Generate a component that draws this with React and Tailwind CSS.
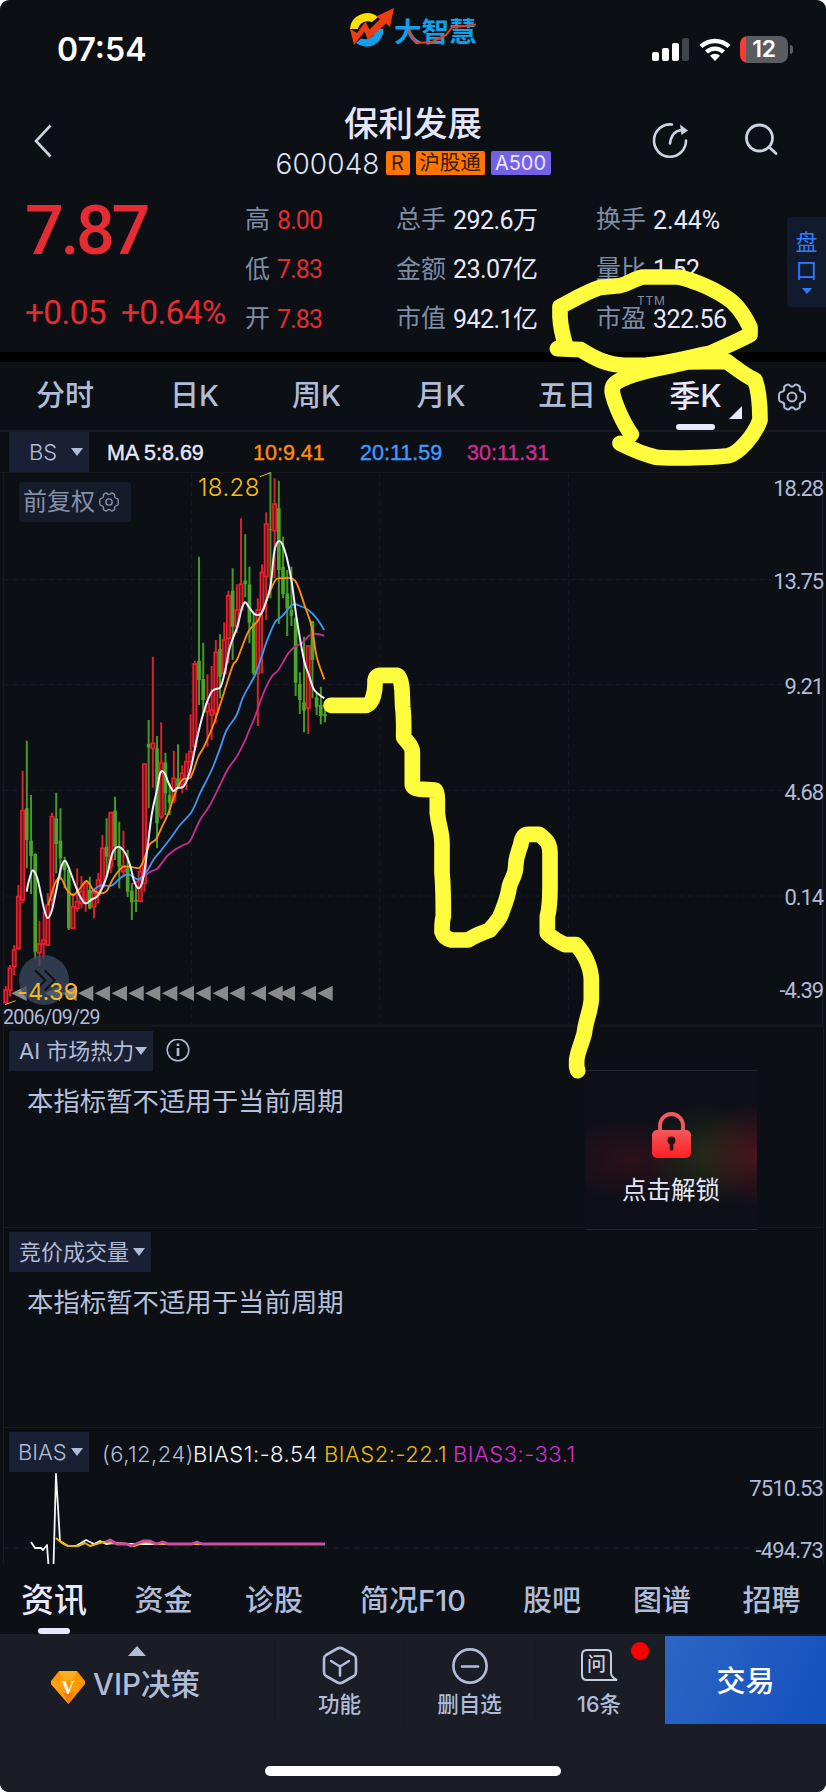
import React from "react";

// [wickTop, bodyTop, bodyBottom, wickBottom, rising]
const CANDLES = [
  [1578, 1590, 1628, 1630, 1], [1515, 1525, 1590, 1610, 1], [1455, 1470, 1520, 1545, 1], [1275, 1310, 1465, 1470, 1],
  [932, 1052, 1320, 1330, 1], [842, 1045, 1140, 1225, 0], [1005, 1142, 1188, 1302, 0], [1180, 1182, 1475, 1498, 0],
  [1382, 1452, 1478, 1518, 1], [1355, 1440, 1452, 1498, 1], [1300, 1335, 1455, 1457, 1], [1058, 1070, 1320, 1340, 1],
  [998, 1075, 1152, 1240, 0], [1045, 1142, 1195, 1260, 0], [1190, 1200, 1230, 1285, 0], [1220, 1230, 1405, 1410, 0],
  [1300, 1340, 1405, 1408, 1], [1225, 1325, 1345, 1355, 1], [1248, 1295, 1330, 1345, 1], [1265, 1270, 1320, 1355, 1],
  [1250, 1290, 1345, 1348, 0], [1290, 1300, 1340, 1375, 1], [1238, 1260, 1305, 1330, 1], [1125, 1165, 1280, 1282, 1],
  [1075, 1160, 1190, 1250, 0], [1055, 1058, 1220, 1240, 1], [1010, 1052, 1160, 1200, 0], [1085, 1165, 1220, 1285, 0],
  [1112, 1218, 1235, 1247, 1], [1170, 1225, 1295, 1312, 0], [1270, 1292, 1327, 1380, 0], [1275, 1320, 1325, 1356, 0],
  [1220, 1235, 1324, 1325, 1], [910, 912, 1270, 1295, 1], [780, 852, 862, 1045, 0], [590, 850, 865, 983, 1],
  [828, 865, 1090, 1165, 0], [787, 908, 1070, 1078, 1], [878, 908, 1000, 1065, 0], [970, 1005, 1028, 1065, 0],
  [872, 955, 1020, 1030, 1], [853, 955, 980, 985, 0], [915, 940, 975, 1000, 1], [880, 905, 955, 990, 1],
  [763, 875, 905, 955, 1], [602, 612, 860, 870, 1], [290, 602, 660, 735, 0], [548, 657, 720, 768, 0],
  [643, 730, 755, 860, 1], [618, 750, 765, 840, 1], [540, 577, 760, 790, 1], [523, 567, 650, 715, 0],
  [487, 540, 640, 642, 1], [392, 407, 535, 610, 1], [325, 392, 500, 600, 0], [373, 450, 500, 520, 1],
  [175, 373, 450, 455, 1], [223, 362, 372, 412, 0], [320, 373, 488, 550, 0], [460, 488, 640, 645, 0],
  [415, 450, 640, 798, 1], [313, 337, 450, 640, 1], [157, 192, 350, 480, 1], [37, 207, 210, 415, 0],
  [55, 132, 212, 355, 1], [62, 145, 330, 492, 0], [230, 320, 402, 415, 0], [330, 400, 445, 528, 0],
  [320, 450, 468, 498, 0], [470, 475, 668, 708, 0], [637, 672, 720, 762, 0], [530, 727, 752, 817, 0],
  [555, 558, 745, 822, 1], [482, 484, 600, 715, 0], [700, 712, 742, 765, 0], [680, 735, 768, 793, 0],
  [740, 762, 768, 787, 0],
];

const MA5 = [[80, 1295], [86, 1265], [98, 1231], [112, 1255], [122, 1300], [133, 1350], [143, 1374], [156, 1350], [172, 1275], [184, 1220], [195, 1202], [205, 1220], [220, 1260], [238, 1305], [256, 1330], [275, 1318], [295, 1305], [320, 1250], [337, 1180], [355, 1160], [375, 1178], [390, 1215], [402, 1262], [415, 1285], [426, 1268], [436, 1215], [455, 1065], [472, 985], [479, 945], [486, 933], [495, 942], [507, 972], [520, 993], [532, 984], [550, 980], [563, 955], [575, 915], [590, 840], [610, 760], [632, 700], [645, 688], [662, 680], [676, 630], [690, 560], [712, 500], [724, 450], [735, 427], [748, 443], [765, 463], [783, 461], [795, 435], [812, 375], [822, 280], [830, 250], [838, 244], [847, 252], [860, 292], [875, 365], [890, 475], [912, 600], [925, 640], [940, 685], [955, 702], [973, 715]];
const MA10 = [[145, 1335], [163, 1275], [181, 1252], [200, 1288], [220, 1305], [240, 1285], [260, 1263], [280, 1290], [300, 1300], [320, 1293], [340, 1255], [368, 1221], [400, 1222], [420, 1222], [435, 1190], [450, 1152], [468, 1138], [485, 1102], [505, 1060], [520, 1015], [535, 978], [550, 957], [572, 952], [595, 890], [612, 860], [640, 795], [665, 720], [697, 620], [712, 597], [745, 515], [775, 480], [800, 420], [825, 362], [845, 355], [885, 362], [915, 440], [935, 500], [950, 590], [973, 658]];
const MA20 = [[272, 1298], [300, 1277], [335, 1277], [360, 1255], [385, 1243], [415, 1258], [440, 1235], [460, 1200], [480, 1175], [510, 1137], [540, 1095], [575, 1055], [600, 1000], [635, 930], [660, 865], [680, 810], [710, 765], [730, 710], [765, 645], [785, 590], [800, 545], [825, 487], [845, 470], [878, 434], [900, 438], [925, 450], [950, 475], [973, 510]];
const MA30 = [[395, 1273], [420, 1260], [435, 1247], [455, 1233], [472, 1226], [500, 1190], [520, 1172], [550, 1155], [570, 1143], [600, 1080], [630, 1035], [660, 975], [685, 925], [710, 890], [735, 842], [748, 810], [765, 770], [790, 700], [815, 650], [835, 630], [865, 580], [885, 560], [905, 550], [930, 525], [950, 522], [973, 527]];

const SIGNALS = [80, 180, 230, 280, 330, 381, 431, 481, 532, 582, 632, 684, 734, 798, 848, 885, 948, 998];

function smooth(p) {
  let d = `M${p[0][0]} ${p[0][1]}`;
  for (let i = 0; i < p.length - 1; i++) {
    const a = p[i - 1] || p[i];
    const b = p[i];
    const c = p[i + 1];
    const e = p[i + 2] || c;
    d += `C${b[0] + (c[0] - a[0]) / 6} ${b[1] + (c[1] - a[1]) / 6} ${c[0] - (e[0] - b[0]) / 6} ${c[1] - (e[1] - b[1]) / 6} ${c[0]} ${c[1]}`;
  }
  return d;
}

function Gear({ className }) {
  return (
    <svg className={className} viewBox="0 0 28 28" fill="none" stroke="currentColor" strokeWidth="2" strokeLinejoin="round">
      <path d="M9.2 1.6Q11 1 12 2.8Q14 4.4 16 2.8Q17 1 18.8 1.6L21 2.9Q22.4 4 21.6 5.6Q21.8 8.6 24.6 8.9Q26.4 9 26.8 11Q27.3 14 26.8 17Q26.4 19 24.6 19.1Q21.8 19.4 21.6 22.4Q22.4 24 21 25.1L18.8 26.4Q17 27 16 25.2Q14 23.6 12 25.2Q11 27 9.2 26.4L7 25.1Q5.6 24 6.4 22.4Q6.2 19.4 3.4 19.1Q1.6 19 1.2 17Q.7 14 1.2 11Q1.6 9 3.4 8.9Q6.2 8.6 6.4 5.6Q5.6 4 7 2.9Z" />
      <circle cx="14" cy="14" r="4.4" />
    </svg>
  );
}

function StatusBar() {
  return (
    <div className="flex h-[98px] shrink-0 items-start">
      <div className="ml-[57px] mt-[34px] w-[293px] whitespace-nowrap text-[32px] font-semibold leading-[31px] text-white">07:54</div>
      <svg className="mt-[7px] h-[42px] w-[44px] shrink-0" viewBox="0 0 44 42">
        <path d="M0 22A17 16 0 0 1 28 10L22 15A10 9 0 0 0 8 22Z" fill="#ffdf00" />
        <path d="M33.500 22A17 17 0 0 1 6 36L11 31.500A11 10 0 0 0 24 28L20 28L20 22Z" fill="#12a0e8" />
        <path d="M0 22L7 26L15.500 14.500L19.500 22.500L30 12L26 9.500L44 1L40 20L36 16.500L18 33L14.500 24.500L4 38Z" fill="#ef3b12" />
      </svg>
      <div className="relative mt-[18px] h-[28px] w-[84px] shrink-0">
        <div className="whitespace-nowrap text-[27.500px] font-bold leading-[28px] text-[#12a0e8]">大智慧</div>
        <svg className="absolute left-0 top-0 h-[28px] w-[84px]" viewBox="0 0 84 28" fill="none">
          <path d="M14 12L22 25L38 24L52 17L58 9.500L82 6.500" stroke="#ef3b12" strokeWidth="2" />
        </svg>
      </div>
      <svg className="ml-[174px] mt-[37px] h-[25px] w-[37px] shrink-0" viewBox="0 0 37 25">
        <rect x="0" y="15" width="7" height="9" rx="2" fill="#fff" />
        <rect x="10" y="11" width="7" height="13" rx="2" fill="#fff" />
        <rect x="20" y="6" width="7" height="18" rx="2" fill="#fff" />
        <rect x="30" y="1" width="7" height="23" rx="2" fill="#404349" />
      </svg>
      <svg className="ml-[10px] mt-[37px] h-[24px] w-[32px] shrink-0" viewBox="0 0 32 24" fill="none" stroke="#fff">
        <path d="M2 9.500A20.500 20.500 0 0 1 30 9.500" strokeWidth="4.400" />
        <path d="M7.500 15A12.500 12.500 0 0 1 24.500 15" strokeWidth="4.200" />
        <path d="M16 24L11 18.800A7.200 7.200 0 0 1 21 18.800Z" fill="#fff" stroke="none" />
      </svg>
      <div className="ml-[9px] mt-[36px] flex h-[27px] w-[48px] items-center justify-center rounded-[8px] bg-[linear-gradient(90deg,#fb3b34_0_6px,#5a5c61_6px)] text-[23px] font-semibold leading-none tracking-[-0.3px] text-white">12</div>
      <div className="ml-[2px] mt-[45px] h-[9px] w-[3px] rounded-r-full bg-[#5a5c61]" />
    </div>
  );
}

function Header() {
  return (
    <div className="flex h-[92px] shrink-0 items-start text-[#cdd3e2]">
      <svg className="ml-[33px] mt-[26px] h-[34px] w-[20px]" viewBox="0 0 20 34" fill="none" stroke="currentColor" strokeWidth="2.600">
        <path d="M17.500 1.500L3 17L17.500 32.500" />
      </svg>
      <div className="ml-[206px] flex w-[308px] flex-col items-center">
        <div className="mt-[7px] whitespace-nowrap text-[34.500px] font-medium leading-[38px] text-[#e4e6fb]">保利发展</div>
        <div className="mt-[8px] flex h-[24px] items-center whitespace-nowrap">
          <span className="w-[110px] pt-[2px] text-[28px] font-light leading-[24px] tracking-[0.100px] text-[#dfe3f5]">600048</span>
          <span className="flex h-[24px] w-[24px] items-center justify-center rounded-[2px] bg-[#ff7500] text-[20px] leading-none text-[#33200c]">R</span>
          <span className="ml-[6px] flex h-[24px] w-[69px] items-center justify-center rounded-[2px] bg-[#ff7500] text-[20.500px] leading-none text-[#33200c]">沪股通</span>
          <span className="ml-[6px] flex h-[24px] w-[60px] items-center justify-center rounded-[2px] bg-[#7561e6] text-[20px] leading-none text-[#e9e6ff]">A500</span>
        </div>
      </div>
      <svg className="ml-[84px] mt-[24px] h-[37px] w-[38px]" viewBox="0 0 38 37" fill="none" stroke="currentColor" strokeWidth="2.600" strokeLinecap="round">
        <path d="M21 2.500A16 16.200 0 1 0 35 18.500" />
        <path d="M19 21.500Q20.500 9 31 8" />
        <path d="M29 2.600L37 8.400L30.500 13Z" fill="currentColor" stroke="none" />
      </svg>
      <svg className="ml-[55px] mt-[25px] h-[33px] w-[35px]" viewBox="0 0 35 33" fill="none" stroke="currentColor" strokeWidth="2.800" strokeLinecap="round">
        <circle cx="15.500" cy="15" r="13" />
        <path d="M26 25L32 30.500" />
      </svg>
    </div>
  );
}

function Stat({ label, value, tone = "text-[#e6e8fb]", tracking = "tracking-[-0.550px]" }) {
  return (
    <div className="flex h-[49.500px] items-center whitespace-nowrap">
      <span className="text-[25px] leading-none text-[#7f8ca6]">{label}</span>
      <span className={`ml-[7px] pt-[1px] font-[Roboto,'Noto_Sans_CJK_SC',sans-serif] text-[25px] leading-none ${tracking} ${tone}`}>{value}</span>
    </div>
  );
}

function Quote() {
  const red = "text-[#e52b33]";
  const narrow = "tracking-[-0.900px]";
  return (
    <div className="flex h-[162px] shrink-0 items-start">
      <div className="ml-[25px] w-[220px] whitespace-nowrap font-[Roboto,sans-serif] text-[#e52b33]">
        <div className="mt-[6px] text-[68.500px] font-medium leading-[70px] tracking-[-3.500px]">7.87</div>
        <div className="mt-[30px] flex text-[33.500px] leading-[34px] tracking-[-0.700px]">
          <span className="w-[96px]">+0.05</span>
          <span>+0.64%</span>
        </div>
      </div>
      <div className="mt-[5px] w-[151px]">
        <Stat label="高" value="8.00" tone={red} tracking={narrow} />
        <Stat label="低" value="7.83" tone={red} tracking={narrow} />
        <Stat label="开" value="7.83" tone={red} tracking={narrow} />
      </div>
      <div className="mt-[5px] w-[200px]">
        <Stat label="总手" value="292.6万" />
        <Stat label="金额" value="23.07亿" />
        <Stat label="市值" value="942.1亿" />
      </div>
      <div className="mt-[5px] w-[191px]">
        <Stat label="换手" value="2.44%" tracking="tracking-[0px]" />
        <Stat label="量比" value="1.52" />
        <div className="relative">
          <Stat label="市盈" value="322.56" />
          <span className="absolute left-[41px] top-[1px] text-[12px] leading-none tracking-[0.800px] text-[#7f8ca6]">TTM</span>
        </div>
      </div>
      <div className="mt-[27px] flex h-[90px] w-[39px] flex-col items-center rounded-l-[4px] bg-[#121b2e] pt-[12px] text-[22px] leading-[27.500px] text-[#2f7dff]">
        <span>盘</span>
        <span>口</span>
        <svg className="mt-[4px] h-[6px] w-[10px]" viewBox="0 0 10 6"><path d="M0 0H10L5 6Z" fill="currentColor" /></svg>
      </div>
    </div>
  );
}

function PeriodTabs() {
  const tab = "flex items-center justify-center";
  return (
    <div className="flex h-[70px] shrink-0 items-stretch whitespace-nowrap border-b-2 border-[#171a20] pb-[2px] text-[29px] font-medium leading-none text-[#b0bcd8]">
      <div className={`${tab} w-[130px]`}>分时</div>
      <div className={`${tab} w-[129px]`}>日K</div>
      <div className={`${tab} w-[115px]`}>周K</div>
      <div className={`${tab} w-[134px]`}>月K</div>
      <div className={`${tab} w-[118px]`}>五日</div>
      <div className={`${tab} relative w-[139px] text-[31px] text-[#e8e9ff]`}>
        季K
        <span className="absolute left-[50px] top-[62px] h-[6px] w-[39px] rounded-full bg-[#e8e9ff]" />
        <svg className="absolute left-[103px] top-[44px] h-[13px] w-[13px]" viewBox="0 0 13 13"><path d="M13 0V13H0Z" fill="currentColor" /></svg>
      </div>
      <div className={`${tab} w-[54px] pt-[3px]`}><Gear className="h-[28px] w-[28px]" /></div>
    </div>
  );
}

function Dropdown({ children, className }) {
  return (
    <div className={`flex h-[40px] shrink-0 items-center justify-between whitespace-nowrap bg-[#192033] pr-[6px] text-[22px] leading-none text-[#b0bcd8] ${className}`}>
      {children}
      <svg className="h-[8px] w-[12px]" viewBox="0 0 12 8"><path d="M0 0H12L6 8Z" fill="currentColor" /></svg>
    </div>
  );
}

function MaLegend() {
  return (
    <div className="flex h-[40px] shrink-0 items-center whitespace-nowrap font-['Liberation_Sans',sans-serif] text-[21.500px] leading-none [-webkit-text-stroke:0.400px]">
      <Dropdown className="ml-[9px] w-[80px] pl-[20px] font-[Inter,sans-serif] font-light [-webkit-text-stroke:0px]"><span>BS</span></Dropdown>
      <span className="ml-[18px] w-[146px] pt-[4px] text-[#e8e9ff]">MA 5:8.69</span>
      <span className="w-[107px] pt-[4px] text-[#ff8d0a]">10:9.41</span>
      <span className="w-[107px] pt-[4px] text-[#3f9bff]">20:11.59</span>
      <span className="pt-[4px] text-[#c92f92]">30:11.31</span>
    </div>
  );
}

function AxisLabels() {
  const cls = "w-full text-right leading-[22px]";
  return (
    <div className="absolute right-[3px] top-0 flex h-full w-[90px] flex-col pt-[6px] font-[Roboto,sans-serif] text-[22px] tracking-[-1.100px] text-[#b0bcd8]">
      <div className={cls}>18.28</div>
      <div className={`${cls} mt-[71px]`}>13.75</div>
      <div className={`${cls} mt-[83px]`}>9.21</div>
      <div className={`${cls} mt-[84px]`}>4.68</div>
      <div className={`${cls} mt-[83px]`}>0.14</div>
      <div className={`${cls} mt-[71px]`}>-4.39</div>
    </div>
  );
}

function PriceChart() {
  return (
    <div className="relative h-[555px] shrink-0">
      <svg className="block h-[555px] w-[826px]" viewBox="0 36 2478 1665" fill="none">
        <g stroke="#181b21" strokeWidth="4">
          <path d="M0 36H2478" />
          <path d="M11 36V1700M2468 36V1700" />
          <path d="M11 1697H2468" strokeWidth="9" stroke="#12171b" />
          <path d="M11 359H2468M11 674H2468M11 991H2468M11 1308H2468M575 40V1700M1139 40V1700M1705 40V1700" strokeDasharray="15 12" strokeWidth="3" />
        </g>
        {CANDLES.map(([wt, bt, bb, wb, up], i) => {
          const x = 17.5 + 12.6 * i;
          const color = up ? "#d8222c" : "#439a25";
          return (
            <g key={i}>
              <path d={`M${x} ${wt}V${up ? bt : wb}M${x} ${bb}V${wb}`} stroke={color} strokeWidth="6" />
              {up ? (
                <rect x={x - 5} y={bt} width="10" height={bb - bt} stroke="#ea202c" strokeWidth="5" fill="#6a161e" />
              ) : (
                <rect x={x - 5.5} y={bt} width="11" height={bb - bt} fill="#4aa528" />
              )}
            </g>
          );
        })}
        <g strokeWidth="5.500" strokeLinejoin="round">
          <path d={smooth(MA30)} stroke="#c22f90" />
          <path d={smooth(MA20)} stroke="#3f97f5" />
          <path d={smooth(MA10)} stroke="#ff8f0a" />
          <path d={smooth(MA5)} stroke="#f0f0fb" strokeWidth="6" />
        </g>
        {SIGNALS.map((x) => (
          <path key={x} d={`M${x} 1577V1623L${x - 46} 1600Z`} fill="#8a8a8a" />
        ))}
        <circle cx="132" cy="1560" r="75" fill="#3c4963" fillOpacity="0.750" />
        <path d="M105 1531L136 1561L105 1592M134 1531L164 1561L134 1592" stroke="#0c0f14" strokeWidth="6" />
        <path d="M780 50L812 38M15 1634L47 1622" stroke="#e9b72c" strokeWidth="3" />
      </svg>
      <div className="absolute left-[19px] top-[10px] flex h-[40px] w-[112px] items-center gap-[4px] whitespace-nowrap rounded-[4px] bg-[#161b2a] pl-[4px] text-[24px] leading-none text-[#8490a8]">
        前复权<Gear className="h-[20px] w-[20px]" />
      </div>
      <div className="absolute left-[198px] top-[4px] text-[24px] font-light leading-[24px] tracking-[0.400px] text-[#fdbb0c]">18.28</div>
      <div className="absolute left-[17px] top-[508px] text-[23.500px] font-normal leading-[24px] tracking-[0.200px] text-[#f2b81e]">-4.39</div>
      <div className="absolute left-[3px] top-[536px] font-[Roboto,sans-serif] text-[19.500px] leading-[20px] tracking-[-0.700px] text-[#b0bcd8]">2006/09/29</div>
      <AxisLabels />
    </div>
  );
}

function LockCard() {
  return (
    <div className="absolute left-[581px] top-[43px] z-10 flex h-[160px] w-[172px] flex-col items-center border-y border-[#24242c] bg-[#0f1017] bg-[radial-gradient(ellipse_60px_52px_at_170px_84px,rgba(110,22,34,0.600),transparent),radial-gradient(ellipse_56px_52px_at_118px_84px,rgba(34,50,24,0.800),transparent),radial-gradient(ellipse_80px_40px_at_45px_88px,rgba(64,16,28,0.600),transparent)] pt-[41px]">
      <svg className="h-[46px] w-[39px]" viewBox="0 0 39 46" fill="none">
        <defs>
          <linearGradient id="lockFill" x1="0" y1="0" x2="0" y2="1">
            <stop offset="0" stopColor="#f4575b" />
            <stop offset="1" stopColor="#ff1f24" />
          </linearGradient>
        </defs>
        <path d="M8 20V13.500A11.500 11.500 0 0 1 31 13.500V20" stroke="#f0595e" strokeWidth="3.800" />
        <rect x="0" y="18" width="39" height="28" rx="5" fill="url(#lockFill)" />
        <circle cx="19.500" cy="28.500" r="4" fill="#2a0d12" />
        <path d="M19.500 28V37" stroke="#2a0d12" strokeWidth="3.600" strokeLinecap="round" />
      </svg>
      <div className="mt-[19px] whitespace-nowrap text-[24.500px] leading-[26px] text-[#e4e6fb]">点击解锁</div>
    </div>
  );
}

function Indicators() {
  const note = "ml-[23px] mt-[16px] whitespace-nowrap text-[26.400px] leading-[28px] text-[#b5c0da]";
  return (
    <div className="ml-[3px] mr-[2px] flex h-[401px] shrink-0 flex-col border-x border-[#171a20]">
      <div className="relative h-[201px] shrink-0 border-b border-[#171a20] pt-[4px]">
        <div className="flex items-center">
          <Dropdown className="ml-[5px] w-[144px] pl-[10px]"><span>AI 市场热力</span></Dropdown>
          <svg className="ml-[13px] h-[24px] w-[24px] text-[#b0bcd8]" viewBox="0 0 24 24" fill="none" stroke="currentColor">
            <circle cx="12" cy="11" r="10.800" strokeWidth="1.500" />
            <path d="M12 9V17M12 4.500V7" strokeWidth="2.600" />
          </svg>
        </div>
        <div className={note}>本指标暂不适用于当前周期</div>
        <LockCard />
      </div>
      <div className="h-[200px] shrink-0 border-b border-[#171a20] pt-[4px]">
        <Dropdown className="ml-[5px] w-[142px] pl-[10px]"><span>竞价成交量</span></Dropdown>
        <div className={note}>本指标暂不适用于当前周期</div>
      </div>
    </div>
  );
}

function BiasChart() {
  return (
    <div className="relative ml-[3px] mr-[2px] flex h-[136px] shrink-0 flex-col border-x border-[#171a20] pt-[4px]">
      <div className="flex items-center whitespace-nowrap text-[22px] font-light leading-none tracking-[0.500px]">
        <Dropdown className="ml-[5px] w-[80px] pl-[9px] tracking-[0px]"><span>BIAS</span></Dropdown>
        <span className="ml-[13px] w-[91px] pt-[3px] text-[#b0bcd8]">(6,12,24)</span>
        <span className="w-[131px] pt-[3px] text-[#f5f5fb]">BIAS1:-8.54</span>
        <span className="w-[129px] pt-[3px] text-[#e9b90f]">BIAS2:-22.1</span>
        <span className="pt-[3px] text-[#d42fd0]">BIAS3:-33.1</span>
      </div>
      <svg className="absolute left-0 top-[44px] h-[92px] w-[820px]" viewBox="4 1472 820 92" fill="none" strokeLinejoin="round">
        <path d="M4 1548H824" stroke="#1b1e24" strokeWidth="1.500" strokeDasharray="5 5" />
        <path d="M31 1542L35 1548L41 1548L43 1550L47 1545L48.500 1566M53.500 1566L56 1474L60 1541L68 1546L76 1546L86 1540L94 1544L100 1541L106 1544L113 1543L127 1544L325 1544" stroke="#f5f5f5" strokeWidth="1.800" />
        <path d="M56 1538L62 1543L68 1546L78 1546L85 1543L90 1546L103 1542L127 1544L134 1546L146 1542L156 1544L200 1544" stroke="#e9b90f" strokeWidth="2" />
        <path d="M106 1542L110 1540L117 1544L127 1544L131 1546L143 1541L150 1541L156 1544L163 1542L168 1544L192 1544L197 1542L202 1544L325 1544" stroke="#cc4ca5" strokeWidth="2.800" />
      </svg>
      <div className="absolute right-0 top-[50px] flex flex-col items-end gap-[40px] font-[Roboto,sans-serif] text-[22px] leading-[22px] tracking-[-0.900px] text-[#b0bcd8]">
        <span>7510.53</span>
        <span>-494.73</span>
      </div>
    </div>
  );
}

function InfoTabs() {
  const tab = "flex items-center justify-center";
  return (
    <div className="flex h-[70px] shrink-0 whitespace-nowrap text-[29px] font-medium leading-none text-[#b0bcd8]">
      <div className={`${tab} relative w-[108px] pt-[2px] text-[33px] text-[#e8e9ff]`}>
        资讯
        <span className="absolute bottom-0 left-[38px] h-[6px] w-[32px] rounded-full bg-[#e8e9ff]" />
      </div>
      <div className={`${tab} w-[111px] pt-[2px]`}>资金</div>
      <div className={`${tab} w-[110px] pt-[2px]`}>诊股</div>
      <div className={`${tab} w-[168px] pt-[2px]`}>简况F10</div>
      <div className={`${tab} w-[110px] pt-[2px]`}>股吧</div>
      <div className={`${tab} w-[110px] pt-[2px]`}>图谱</div>
      <div className={`${tab} w-[109px] pt-[2px]`}>招聘</div>
    </div>
  );
}

function BottomBar() {
  const item = "flex h-[84px] flex-col items-center border-l border-[#171922] whitespace-nowrap text-[21.500px] font-medium leading-[24px] text-[#b0bcd8]";
  return (
    <div className="flex h-[158px] shrink-0 flex-col bg-[#1b1d26]">
      <div className="flex h-[90px] items-end">
        <div className="flex h-[90px] w-[274px] flex-col text-[#b0bcd8]">
          <svg className="ml-[128px] mt-[12px] h-[10px] w-[18px]" viewBox="0 0 18 10"><path d="M9 0L18 10H0Z" fill="currentColor" /></svg>
          <div className="ml-[51px] mt-[12px] flex h-[34px] items-center">
            <svg className="mt-[4px] h-[33px] w-[34px]" viewBox="0 0 34 33">
              <path d="M8 0H26L34 10V13L17.500 33L0 13V10Z" fill="#ff9800" />
              <path d="M8 0H26L22 9H12Z" fill="#ffab1c" />
              <path d="M0 10L12 9L17.500 33L0 13Z" fill="#ff9d10" />
              <path d="M12 22L17.500 33L23 22Z" fill="#f47a08" />
              <text x="17" y="22.500" textAnchor="middle" fontFamily="Liberation Serif, serif" fontWeight="bold" fontSize="18" fill="#fff">V</text>
            </svg>
            <span className="ml-[8px] whitespace-nowrap text-[29.500px] font-medium leading-none">VIP决策</span>
          </div>
        </div>
        <div className={`${item} w-[130px]`}>
          <svg className="mt-[6px] h-[40px] w-[36px]" viewBox="0 0 36 40" fill="none" stroke="currentColor" strokeWidth="2.600" strokeLinecap="round" strokeLinejoin="round">
            <path d="M15.500 2.500Q18 1.200 20.500 2.500L32 9Q34 10.300 34 13V26Q34 28.700 32 30L20.500 36.500Q18 37.800 15.500 36.500L4 30Q2 28.700 2 26V13Q2 10.300 4 9Z" />
            <path d="M9 15L18 20.500L27 15M18 20.500V29.500" />
          </svg>
          <span className="mt-[6px]">功能</span>
        </div>
        <div className={`${item} w-[130px]`}>
          <svg className="mt-[8px] h-[38px] w-[38px]" viewBox="0 0 38 38" fill="none" stroke="currentColor" strokeWidth="2.600">
            <circle cx="19" cy="18" r="16.600" />
            <path d="M11 18.500H27" strokeLinecap="round" />
          </svg>
          <span className="mt-[6px]">删自选</span>
        </div>
        <div className={`${item} relative w-[131px] pr-[2px]`}>
          <div className="relative mt-[8px] h-[38px] w-[38px]">
            <svg className="h-[38px] w-[38px]" viewBox="0 0 38 38" fill="none" stroke="#c8cddd" strokeWidth="2">
              <path d="M35 32H7Q2 32 2 27V7Q2 2 7 2H27Q31 2 31 7V25Q31 29 37 32Z" />
            </svg>
            <span className="absolute left-[7px] top-[5px] text-[19px] leading-[24px] text-[#c8cddd]">问</span>
          </div>
          <span className="mt-[6px]">16条</span>
          <span className="absolute left-[96px] top-[2px] h-[18px] w-[18px] rounded-full bg-[#ff0000]" />
        </div>
        <div className="flex h-[88px] w-[161px] items-center justify-center bg-[linear-gradient(115deg,#2d66c4,#1250bd)] pt-[2px] text-[29px] font-medium leading-none text-white">交易</div>
      </div>
      <div className="mx-auto mt-[42px] h-[10px] w-[296px] rounded-full bg-white" />
    </div>
  );
}

function Scribbles() {
  return (
    <svg className="pointer-events-none absolute left-0 top-0 z-20 h-[1792px] w-[826px]" viewBox="0 0 826 1792" fill="none" stroke="#fffb3d" strokeLinecap="round" strokeLinejoin="round">
      <g transform="translate(400 190) scale(0.33333)" strokeWidth="47">
        <path d="M472 476L542 479C580 503 620 525 675 526L740 525C820 518 880 498 930 490C980 468 1030 445 1050 434L1050 412C1030 370 1005 338 978 322C930 290 870 268 835 261L728 261C700 266 680 287 648 288L602 292C560 305 510 335 480 350L480 380C482 420 490 445 498 470" />
        <path d="M694 733C670 700 645 645 637 608C634 585 645 575 680 562C720 546 750 540 800 530L860 516L980 514C1010 536 1040 560 1065 570C1076 600 1080 650 1080 690C1062 740 1015 790 985 797C930 803 800 807 765 801C730 793 690 775 660 760" />
      </g>
      <path transform="translate(320 640) scale(0.33333)" strokeWidth="47" d="M33 196H140C160 188 166 150 165 125Q165 106 182 106H230Q243 108 246 150L248 200Q252 230 251 292C262 306 277 318 277 335V435Q280 448 310 448L345 450Q352 455 352 480V520C356 560 366 575 366 610V700Q370 740 370 830Q366 840 366 875Q372 895 395 900H445C470 882 490 878 510 870C520 852 538 845 546 815C556 790 565 765 568 740C575 715 587 705 587 680C588 640 602 625 604 605Q610 583 625 583H658C680 600 690 610 690 640V740Q690 800 682 830V880Q700 898 735 914H768C794 940 814 985 814 1020V1080C810 1120 797 1140 793 1180C782 1220 771 1240 770 1262V1280L773 1292" />
    </svg>
  );
}

export default function App() {
  return (
    <div className="relative flex h-[1792px] w-[826px] flex-col overflow-hidden rounded-[9px] bg-[#0c0f14] font-[Inter,'Noto_Sans_CJK_SC',sans-serif]">
      <StatusBar />
      <Header />
      <Quote />
      <div className="h-[10px] shrink-0 bg-black" />
      <PeriodTabs />
      <MaLegend />
      <PriceChart />
      <Indicators />
      <BiasChart />
      <InfoTabs />
      <BottomBar />
      <Scribbles />
    </div>
  );
}
